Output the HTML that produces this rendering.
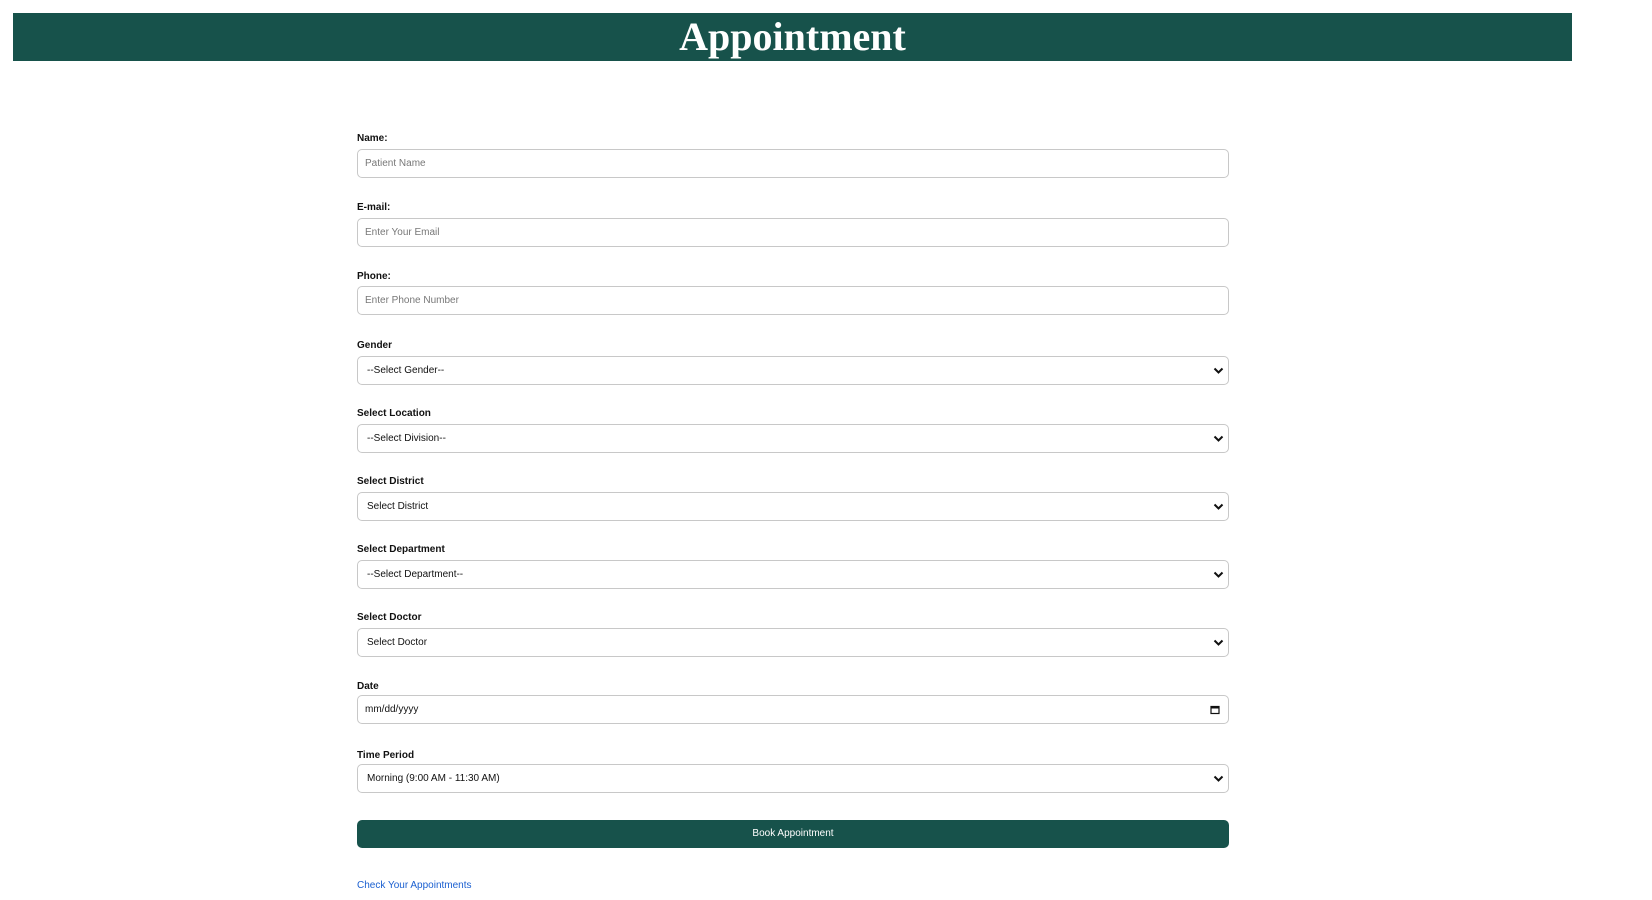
<!DOCTYPE html>
<html><head><meta charset="utf-8"><style>
*{box-sizing:border-box;margin:0;padding:0}
body{width:1652px;height:900px;background:#fff;position:relative;font-family:"Liberation Sans",sans-serif;overflow:hidden}
.hd{position:absolute;left:13px;top:13px;width:1559px;height:48px;background:#17524b;color:#fff;font-family:"Liberation Serif",serif;font-weight:bold;font-size:40px;text-align:center;line-height:48px}
.lb{position:absolute;left:357px;font-size:10px;font-weight:bold;color:#111}
.in{position:absolute;left:357px;width:872px;height:29px;border:1px solid #c8c8c8;border-radius:5px;font-size:10px;line-height:27px;padding-left:7px;color:#777}
.sel{color:#111;padding-left:9px}
.ch{position:absolute;right:4px;top:10px}
.btn{position:absolute;left:357px;top:820px;width:872px;height:28px;background:#17524b;border-radius:5px;color:#fff;font-size:10px;text-align:center;line-height:28px}
.lk{position:absolute;left:357px;top:880px;font-size:10px;color:#1a5fd0}
</style></head><body>
<div class="hd">Appointment</div>

<div class="lb" style="top:133px">Name:</div>
<div class="in" style="top:149px">Patient Name</div>

<div class="lb" style="top:202px">E-mail:</div>
<div class="in" style="top:218px">Enter Your Email</div>

<div class="lb" style="top:271px">Phone:</div>
<div class="in" style="top:286px">Enter Phone Number</div>

<div class="lb" style="top:340px">Gender</div>
<div class="in sel" style="top:356px">--Select Gender--<svg class="ch" width="11" height="8" viewBox="0 0 11 8"><path d="M1.5 1.5L5.5 5.5L9.5 1.5" stroke="#111" stroke-width="2" fill="none"/></svg></div>

<div class="lb" style="top:408px">Select Location</div>
<div class="in sel" style="top:424px">--Select Division--<svg class="ch" width="11" height="8" viewBox="0 0 11 8"><path d="M1.5 1.5L5.5 5.5L9.5 1.5" stroke="#111" stroke-width="2" fill="none"/></svg></div>

<div class="lb" style="top:476px">Select District</div>
<div class="in sel" style="top:492px">Select District<svg class="ch" width="11" height="8" viewBox="0 0 11 8"><path d="M1.5 1.5L5.5 5.5L9.5 1.5" stroke="#111" stroke-width="2" fill="none"/></svg></div>

<div class="lb" style="top:544px">Select Department</div>
<div class="in sel" style="top:560px">--Select Department--<svg class="ch" width="11" height="8" viewBox="0 0 11 8"><path d="M1.5 1.5L5.5 5.5L9.5 1.5" stroke="#111" stroke-width="2" fill="none"/></svg></div>

<div class="lb" style="top:612px">Select Doctor</div>
<div class="in sel" style="top:628px">Select Doctor<svg class="ch" width="11" height="8" viewBox="0 0 11 8"><path d="M1.5 1.5L5.5 5.5L9.5 1.5" stroke="#111" stroke-width="2" fill="none"/></svg></div>

<div class="lb" style="top:681px">Date</div>
<div class="in sel" style="top:695px;padding-left:7px">mm/dd/yyyy<svg class="ch" style="top:9px;right:8px" width="10" height="10" viewBox="0 0 10 10"><rect x="1" y="1.5" width="8" height="7" stroke="#111" stroke-width="1.2" fill="none"/><rect x="1" y="1.5" width="8" height="2" fill="#111"/></svg></div>

<div class="lb" style="top:750px">Time Period</div>
<div class="in sel" style="top:764px">Morning (9:00 AM - 11:30 AM)<svg class="ch" width="11" height="8" viewBox="0 0 11 8"><path d="M1.5 1.5L5.5 5.5L9.5 1.5" stroke="#111" stroke-width="2" fill="none"/></svg></div>

<div class="btn">Book Appointment</div>
<div class="lk">Check Your Appointments</div>
</body></html>
